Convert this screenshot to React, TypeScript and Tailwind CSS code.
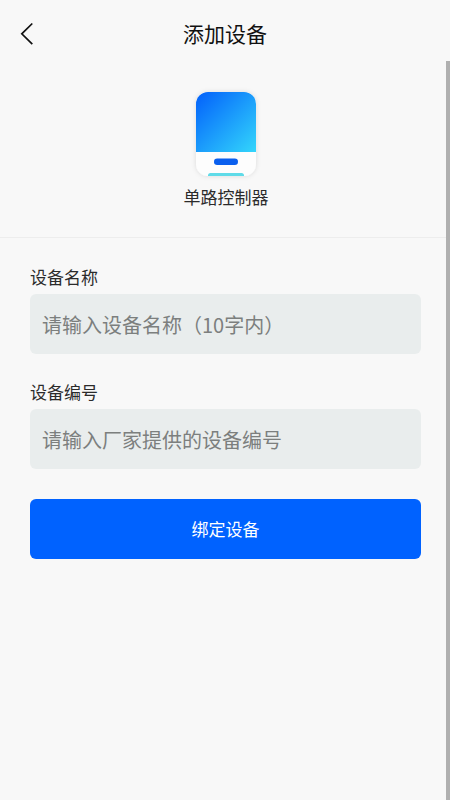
import { useState } from 'react'

interface FieldProps {
  id: string
  label: string
  placeholder: string
  value: string
  onChange: (value: string) => void
}

function Field({ id, label, placeholder, value, onChange }: FieldProps) {
  return (
    <div className="flex flex-col gap-[5px]">
      <label htmlFor={id} className="text-[17px] leading-6 text-[#2b2b2b]">
        {label}
      </label>
      <input
        id={id}
        type="text"
        value={value}
        onChange={(e) => onChange(e.target.value)}
        placeholder={placeholder}
        className="h-[60px] w-full rounded-md bg-[#e9eded] px-3 text-xl text-[#2b2b2b] outline-none placeholder:text-[#7c7f7e]"
      />
    </div>
  )
}

function DeviceIcon() {
  return (
    <svg width="76" height="101" viewBox="-8 -8 76 101" className="-m-2" aria-hidden="true">
      <defs>
        <linearGradient id="screen" x1="0" y1="0" x2="1" y2="1">
          <stop offset="0.08" stopColor="#0669fb" />
          <stop offset="1" stopColor="#33d6fb" />
        </linearGradient>
        <filter id="shadow" x="-20%" y="-20%" width="140%" height="140%">
          <feDropShadow dx="0" dy="0" stdDeviation="2.5" floodColor="#000" floodOpacity="0.12" />
        </filter>
      </defs>
      <rect width="60" height="84" rx="12" fill="#fdfdfd" filter="url(#shadow)" />
      <path d="M0 60V12A12 12 0 0 1 12 0H48A12 12 0 0 1 60 12V60Z" fill="url(#screen)" />
      <rect x="18" y="66.500" width="24" height="6.500" rx="3.2" fill="#0a5fee" />
      <path d="M12 84V83.500Q12 81 14.500 81H45.500Q48 81 48 83.500V84Z" fill="#5fdbe8" />
    </svg>
  )
}

export default function App() {
  const [name, setName] = useState('')
  const [code, setCode] = useState('')

  return (
    <div className="flex min-h-screen flex-col bg-[#f8f8f8] font-['Noto_Sans_CJK_SC',sans-serif]">
      <header className="grid h-[61px] grid-cols-[1fr_auto_1fr] items-center px-4 pt-1">
        <button type="button" aria-label="返回" className="justify-self-start px-1">
          <svg width="14" height="24" viewBox="0 0 14 24" fill="none" stroke="#111" strokeWidth="1.7">
            <path d="M12.300 2.500L1.800 12.800L12.300 23.100" />
          </svg>
        </button>
        <h1 className="text-[21px] leading-8 text-[#111]">添加设备</h1>
      </header>

      <main className="relative flex-1">
        <section className="flex flex-col items-center gap-2 border-b border-[#ededed] pt-[31px] pb-7 pl-0.5">
          <DeviceIcon />
          <p className="text-[17px] leading-6 text-[#2b2b2b]">单路控制器</p>
        </section>

        <form className="pt-[27px] pr-[29px] pl-[30px]" onSubmit={(e) => e.preventDefault()}>
          <div className="flex flex-col gap-[26px]">
            <Field
              id="device-name"
              label="设备名称"
              placeholder="请输入设备名称（10字内）"
              value={name}
              onChange={setName}
            />
            <Field
              id="device-code"
              label="设备编号"
              placeholder="请输入厂家提供的设备编号"
              value={code}
              onChange={setCode}
            />
          </div>
          <button
            type="submit"
            className="mt-[30px] h-[60px] w-full rounded-md bg-[#0062ff] text-[17px] text-white"
          >
            绑定设备
          </button>
        </form>

        {/* scroll indicator */}
        <div className="absolute inset-y-0 right-0 w-1 bg-[#b0b0b0]" />
      </main>
    </div>
  )
}
